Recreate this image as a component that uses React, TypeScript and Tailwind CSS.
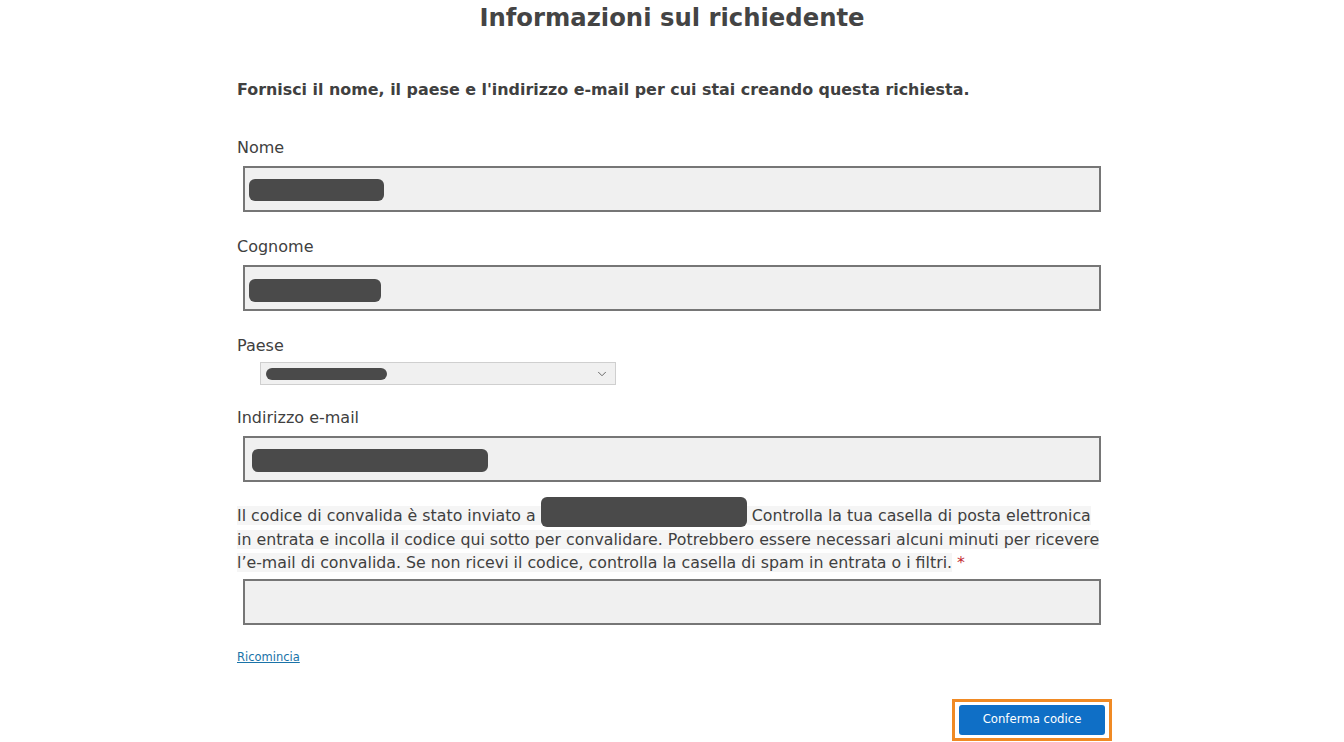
import { ChevronDown } from "lucide-react"

function Redacted({ className }: { className: string }) {
    return <span className={`inline-block rounded-[6px] bg-[#4a4a4a] ${className}`} />
}

function Field({ label, children }: { label: string; children: React.ReactNode }) {
    return (
        <div className="flex flex-col">
            <label className="text-[16px] leading-5 text-[#404040]">{label}</label>
            {children}
        </div>
    )
}

function TextBox({ className = "mt-[8px]", children }: { className?: string; children?: React.ReactNode }) {
    return (
        <div className={`ml-[6px] flex h-[46px] w-[858px] items-center border-2 border-[#767676] bg-[#f0f0f0] px-1 ${className}`}>
            {children}
        </div>
    )
}

export default function App() {
    return (
        <div className="min-h-[742px] bg-white font-['DejaVu_Sans',Verdana,sans-serif] text-[#404040]">
            <div className="mx-auto w-[870px] pt-[3px]">
                <h1 className="text-center text-[24.3px] font-bold leading-[30px] text-[#444]">Informazioni sul richiedente</h1>

                <p className="mt-[47px] text-[15.9px] font-bold leading-5 text-[#404040]">
                    Fornisci il nome, il paese e l'indirizzo e-mail per cui stai creando questa richiesta.
                </p>

                <div className="mt-[38px]">
                    <Field label="Nome">
                        <TextBox>
                            <Redacted className="h-[22px] w-[135px] translate-y-[1px]" />
                        </TextBox>
                    </Field>
                </div>

                <div className="mt-[25px]">
                    <Field label="Cognome">
                        <TextBox>
                            <Redacted className="h-[23px] w-[132px] translate-y-[2px]" />
                        </TextBox>
                    </Field>
                </div>

                <div className="mt-[25px]">
                    <Field label="Paese">
                        <div className="ml-[23px] mt-[6px] flex h-[23px] w-[356px] items-center justify-between border border-[#cfcfcf] bg-[#f0f0f0] pl-[5px] pr-[6px]">
                            <Redacted className="h-[12px] w-[121px]" />
                            <ChevronDown className="h-[14px] w-[14px] text-[#555]" strokeWidth={1.5} />
                        </div>
                    </Field>
                </div>

                <div className="mt-[23px]">
                    <Field label="Indirizzo e-mail">
                        <TextBox>
                            <Redacted className="ml-[3px] h-[23px] w-[236px] translate-y-[1px]" />
                        </TextBox>
                    </Field>
                </div>

                <p className="mt-[15px] text-[15.8px] leading-[23.5px] text-[#404040]">
                    <span className="bg-[#f5f5f5]">Il codice di convalida è stato inviato a </span>
                    <Redacted className="h-[30px] w-[206px] align-[-6px]" />
                    <span className="bg-[#f5f5f5]"> Controlla la tua casella di posta elettronica</span>
                    <br />
                    <span className="bg-[#f5f5f5]">
                        in entrata e incolla il codice qui sotto per convalidare. Potrebbero essere necessari alcuni minuti per ricevere
                    </span>
                    <br />
                    <span className="bg-[#f5f5f5]">
                        l’e-mail di convalida. Se non ricevi il codice, controlla la casella di spam in entrata o i filtri.
                    </span>{" "}
                    <span className="text-[#c4262e]">*</span>
                </p>

                <TextBox className="mt-[4px]" />

                <a href="#" className="mt-[24px] inline-block text-[11.5px] leading-4 text-[#1a73a8] underline">
                    Ricomincia
                </a>

                <div className="mt-[31px] flex justify-end">
                    <div className="mr-[-5px] border-[3px] border-[#f08a24] px-[4px] py-[3px]">
                        <button className="h-[30px] w-[146px] rounded-[3px] bg-[#0f6fc6] text-[11.7px] text-white">
                            Conferma codice
                        </button>
                    </div>
                </div>
            </div>
        </div>
    )
}
